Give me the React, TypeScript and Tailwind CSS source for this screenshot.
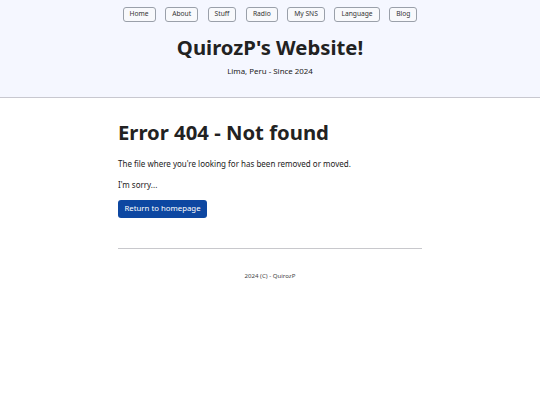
import React from "react";

const links = ["Home", "About", "Stuff", "Radio", "My SNS", "Language", "Blog"];

export default function App() {
  return (
    <div className="min-h-[405px] bg-white text-[#222]" style={{ fontFamily: '"Noto Sans", sans-serif' }}>
      {/* Header */}
      <header className="bg-[#f5f7ff] border-b border-[#c8c8d0] h-[98px] flex flex-col items-center">
        <nav className="flex gap-[9.5px] pt-[7px]">
          {links.map((l) => (
            <a
              key={l}
              className="h-[15px] px-[6px] flex items-center border border-[#9aa0aa] rounded-[3px] bg-[#f8f9fc] text-[6.7px] text-[#333] leading-none"
            >
              {l}
            </a>
          ))}
        </nav>
        <h1 className="mt-[10px] text-[20.3px] font-bold leading-[30px] text-[#222]">QuirozP's Website!</h1>
        <p className="mt-[3px] text-[7.9px] leading-[12px] text-[#222]">Lima, Peru - Since 2024</p>
      </header>

      {/* Main */}
      <main className="w-[304px] mx-auto">
        <h2 className="mt-[19px] text-[20.3px] font-bold leading-[30px] text-[#222]">Error 404 - Not found</h2>
        <p className="mt-[11px] text-[8px] leading-[12px]">The file where you're looking for has been removed or moved.</p>
        <p className="mt-[9px] text-[8px] leading-[12px]">I'm sorry...</p>
        <button className="mt-[9px] h-[18px] w-[89px] rounded-[3px] bg-[#0d47a1] text-white text-[7.8px] leading-none flex items-center justify-center">
          Return to homepage
        </button>
        <hr className="mt-[30px] border-t border-[#c8c8cc]" />
        <footer className="mt-[22px] text-center text-[6.1px] leading-[10px] text-[#444]">2024 (C) - QuirozP</footer>
      </main>
    </div>
  );
}
